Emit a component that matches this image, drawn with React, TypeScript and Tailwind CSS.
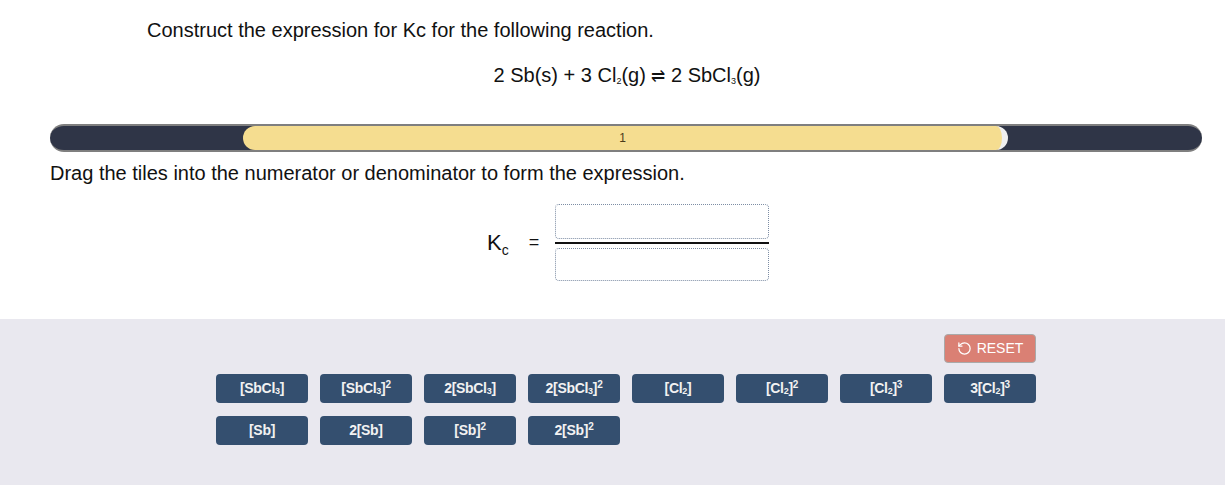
import { RotateCcw } from "lucide-react";

const font = { fontFamily: '"Liberation Sans", Arial, sans-serif' };

function Tile({ children }: { children: React.ReactNode }) {
  return (
    <div className="h-[29px] w-[92px] rounded-[4px] bg-[#344f6f] flex items-center justify-center text-[14px] font-semibold text-[#f2f2f2] tracking-[-0.3px]">
      {children}
    </div>
  );
}

const Sub = ({ c }: { c: string }) => <sub className="text-[9px] align-baseline relative top-[2px]">{c}</sub>;
const Sup = ({ c }: { c: string }) => <sup className="text-[10px] align-baseline relative -top-[4px]">{c}</sup>;

export default function App() {
  return (
    <div className="w-[1225px] h-[485px] bg-white text-[#111] overflow-hidden" style={font}>
      <div className="pl-[147px] pt-[18px] text-[20px] leading-[24px]">
        Construct the expression for Kc for the following reaction.
      </div>
      <div className="mt-[21px] ml-[50px] w-[1152px] flex justify-center text-[20px] leading-[24px] pl-[2px]">
        <span>
          2 Sb(s) + 3 Cl<Sub c="2" />(g) <span className="text-[17px]">⇌</span> 2 SbCl<Sub c="3" />(g)
        </span>
      </div>

      {/* progress bar */}
      <div className="mt-[35px] ml-[50px] w-[1152px] h-[28px] rounded-full bg-[#2f3547] border-y-2 border-[#7f7f7f] relative overflow-hidden">
        <div className="absolute left-[193px] top-0 h-full w-[765px] rounded-full bg-[#f5dd90] border-r-[6px] border-[#efefef] flex items-center justify-center text-[12px] text-[#4a3a1a]">
          1
        </div>
      </div>

      <div className="mt-[9px] ml-[50px] text-[20px] leading-[24px]">
        Drag the tiles into the numerator or denominator to form the expression.
      </div>

      {/* Kc expression */}
      <div className="mt-[19px] flex items-center pl-[487px]">
        <div className="text-[22px] leading-none">
          K<span className="text-[14px] relative top-[5px]">c</span>
        </div>
        <div className="ml-[20px] text-[18px]">=</div>
        <div className="ml-[16px] w-[214px] flex flex-col">
          <div className="h-[35px] rounded-[4px] border border-dotted border-[#7d8da4]" />
          <div className="mt-[3px] h-[2px] bg-[#111]" />
          <div className="mt-[4px] h-[33px] rounded-[4px] border border-dotted border-[#7d8da4]" />
        </div>
      </div>

      {/* tile panel */}
      <div className="mt-[38px] h-[166px] bg-[#e9e8ef] pt-[15px]">
        <div className="w-[820px] ml-[216px]">
          <div className="flex justify-end">
            <button className="h-[29px] w-[92px] rounded-[4px] bg-[#da8074] border border-[#a9a9a9] flex items-center justify-center gap-[5px] text-[14px] text-white">
              <RotateCcw size={15} strokeWidth={2} />
              RESET
            </button>
          </div>
          <div className="mt-[11px] grid grid-cols-[repeat(8,92px)] gap-x-[12px] gap-y-[13px]">
            <Tile>[SbCl<Sub c="3" />]</Tile>
            <Tile>[SbCl<Sub c="3" />]<Sup c="2" /></Tile>
            <Tile>2[SbCl<Sub c="3" />]</Tile>
            <Tile>2[SbCl<Sub c="3" />]<Sup c="2" /></Tile>
            <Tile>[Cl<Sub c="2" />]</Tile>
            <Tile>[Cl<Sub c="2" />]<Sup c="2" /></Tile>
            <Tile>[Cl<Sub c="2" />]<Sup c="3" /></Tile>
            <Tile>3[Cl<Sub c="2" />]<Sup c="3" /></Tile>
            <Tile>[Sb]</Tile>
            <Tile>2[Sb]</Tile>
            <Tile>[Sb]<Sup c="2" /></Tile>
            <Tile>2[Sb]<Sup c="2" /></Tile>
          </div>
        </div>
      </div>
    </div>
  );
}
